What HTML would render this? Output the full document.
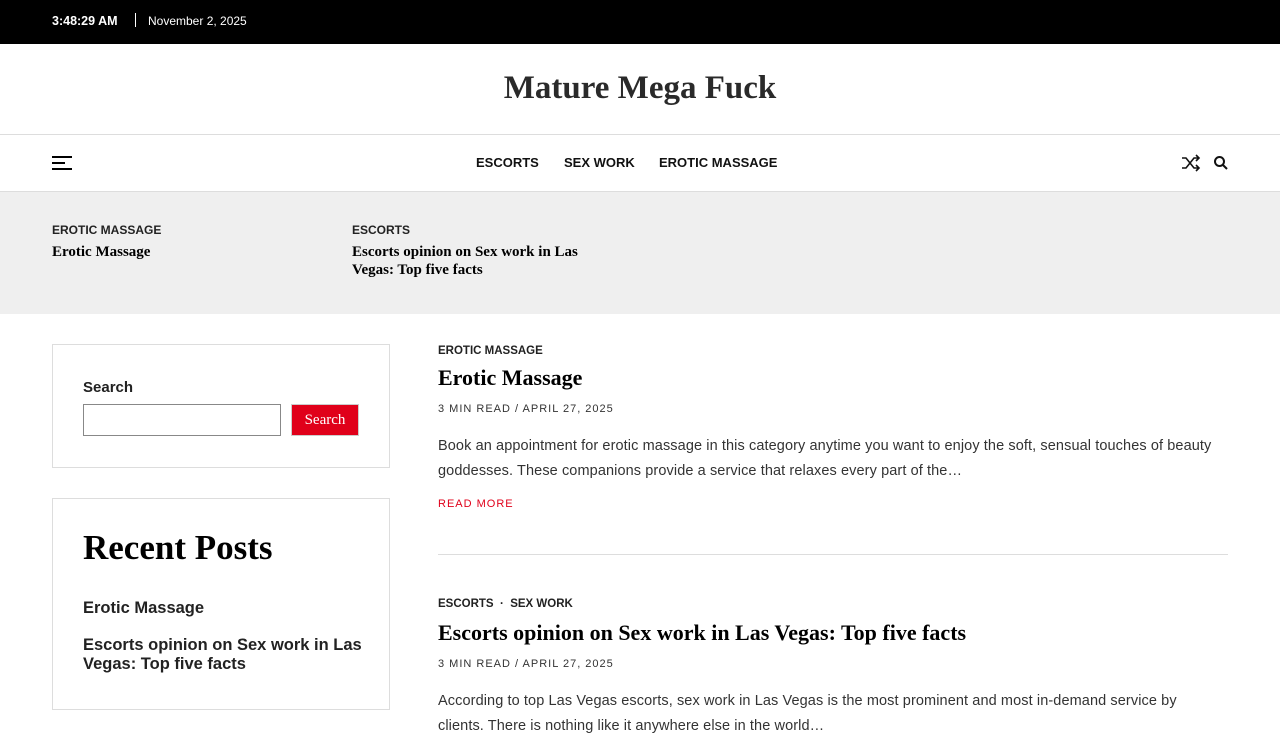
<!DOCTYPE html>
<html><head><meta charset="utf-8"><style>
*{margin:0;padding:0;box-sizing:border-box}
body{width:1280px;height:720px;overflow:hidden;background:#fff;font-family:"Liberation Sans",sans-serif;color:#222}
.serif{font-family:"Liberation Serif",serif}
.top{height:44px;background:#000;color:#fff;font-size:12px;position:relative}
.top span{position:absolute;top:14px}
.hdr{height:91px;border-bottom:1px solid #ddd;text-align:center}
.hdr h1{font-size:33px;font-weight:bold;color:#2a2a2a;padding-top:26px}
.nav{height:57px;border-bottom:1px solid #ddd;position:relative}
.nav .m{position:absolute;top:20px;font-size:13px;font-weight:bold;color:#111}
.band{height:122px;background:#efefef;position:relative}
.cat{font-size:12px;font-weight:bold;color:#222;text-transform:uppercase}
.t{font-size:15px;font-weight:bold;color:#000;line-height:18px}
.box{position:absolute;left:52px;width:338px;border:1px solid #ddd}
.meta{font-size:11px;letter-spacing:1px;color:#333}
.p{font-size:14.5px;line-height:25px;color:#333;letter-spacing:0.1px}
</style></head><body>
<div class="top"><span style="left:52px;font-weight:bold;font-size:12.5px">3:48:29 AM</span><span style="left:135px;top:13px;width:1px;height:14px;background:#fff"></span><span style="left:148px">November 2, 2025</span></div>
<div class="hdr"><h1 class="serif">Mature Mega Fuck</h1></div>
<div class="nav">
<div style="position:absolute;left:52px;top:21px;width:20px;height:2px;background:#000"></div>
<div style="position:absolute;left:52px;top:27px;width:13px;height:2px;background:#000"></div>
<div style="position:absolute;left:52px;top:33px;width:20px;height:2px;background:#000"></div>
<span class="m" style="left:476px">ESCORTS</span><span class="m" style="left:564px">SEX WORK</span><span class="m" style="left:659px">EROTIC MASSAGE</span>
<svg style="position:absolute;left:1181px;top:19px" width="20" height="18" viewBox="0 0 20 18" fill="none" stroke="#111" stroke-width="1.6"><path d="M1 4h4l8 10h5M1 14h4l8-10h5M15 1l3 3-3 3M15 11l3 3-3 3"/></svg>
<svg style="position:absolute;left:1213px;top:20px" width="16" height="16" viewBox="0 0 16 16" fill="none" stroke="#111" stroke-width="2"><circle cx="6.5" cy="6.5" r="4.5"/><path d="M10 10l4 4"/></svg>
</div>
<div class="band">
<div style="position:absolute;left:52px;top:31px"><div class="cat">Erotic Massage</div><div class="t serif" style="margin-top:6px">Erotic Massage</div></div>
<div style="position:absolute;left:352px;top:31px;width:260px"><div class="cat">Escorts</div><div class="t serif" style="margin-top:6px">Escorts opinion on Sex work in Las Vegas: Top five facts</div></div>
</div>
<div class="box" style="top:344px;height:124px;padding:34px 30px">
<div style="font-size:15px;font-weight:bold">Search</div>
<div style="margin-top:8px;display:flex;gap:10px"><div style="width:198px;height:32px;border:1px solid #888"></div><div class="serif" style="width:68px;height:32px;background:#e0001a;color:#fff;font-size:15px;text-align:center;line-height:30px;border:1px solid #ccc">Search</div></div>
</div>
<div class="box" style="top:498px;height:212px;padding:30px 20px 30px 30px">
<div class="serif" style="font-size:35px;font-weight:bold;color:#000;line-height:38px">Recent Posts</div>
<div style="font-size:16.5px;font-weight:bold;margin-top:32px">Erotic Massage</div>
<div style="font-size:16.5px;font-weight:bold;margin-top:18px;line-height:19px">Escorts opinion on Sex work in Las Vegas: Top five facts</div>
</div>
<div style="position:absolute;left:438px;top:345px;width:790px">
<div class="cat" style="font-size:11.5px">Erotic Massage</div>
<div class="serif" style="font-size:22px;font-weight:bold;color:#000;margin-top:8px;line-height:26px">Erotic Massage</div>
<div class="meta" style="margin-top:12px">3 MIN READ / APRIL 27, 2025</div>
<div class="p" style="margin-top:19px">Book an appointment for erotic massage in this category anytime you want to enjoy the soft, sensual touches of beauty goddesses. These companions provide a service that relaxes every part of the…</div>
<div class="meta" style="color:#e0001a;margin-top:14px">READ MORE</div>
<div style="border-top:1px solid #ddd;margin-top:44px"></div>
<div class="cat" style="font-size:11.5px;margin-top:43px">Escorts &nbsp;·&nbsp; Sex Work</div>
<div class="serif" style="font-size:22px;font-weight:bold;color:#000;margin-top:10px;line-height:26px">Escorts opinion on Sex work in Las Vegas: Top five facts</div>
<div class="meta" style="margin-top:12px">3 MIN READ / APRIL 27, 2025</div>
<div class="p" style="margin-top:19px;width:760px">According to top Las Vegas escorts, sex work in Las Vegas is the most prominent and most in-demand service by clients. There is nothing like it anywhere else in the world…</div>
</div>
</body></html>
